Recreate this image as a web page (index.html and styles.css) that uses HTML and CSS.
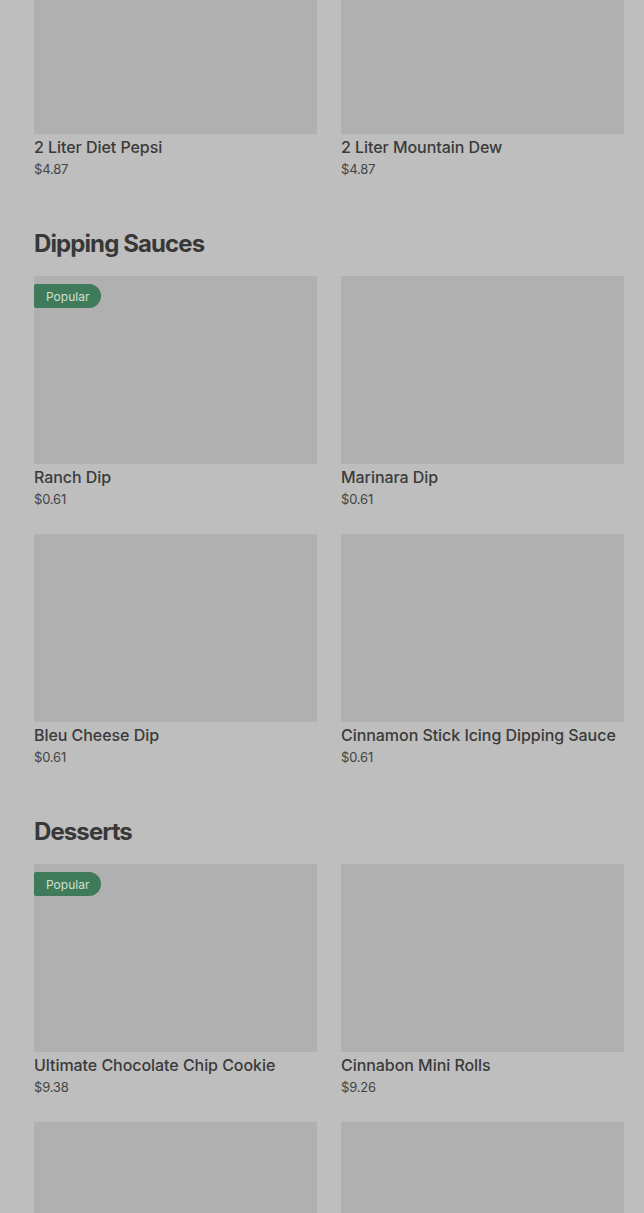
FILE: index.html
```html
<!DOCTYPE html>
<html>
<head>
<meta charset="utf-8">
<link rel="stylesheet" href="styles.css">
</head>
<body>
<main class="menu">
  <section class="section section-first">
    <div class="grid">
      <div class="card"><div class="thumb"></div><div class="name">2 Liter Diet Pepsi</div><div class="price">$4.87</div></div>
      <div class="card"><div class="thumb"></div><div class="name">2 Liter Mountain Dew</div><div class="price">$4.87</div></div>
    </div>
  </section>
  <section class="section">
    <h2 class="heading">Dipping Sauces</h2>
    <div class="grid">
      <div class="card"><div class="thumb"><span class="badge">Popular</span></div><div class="name">Ranch Dip</div><div class="price">$0.61</div></div>
      <div class="card"><div class="thumb"></div><div class="name">Marinara Dip</div><div class="price">$0.61</div></div>
      <div class="card"><div class="thumb"></div><div class="name">Bleu Cheese Dip</div><div class="price">$0.61</div></div>
      <div class="card"><div class="thumb"></div><div class="name">Cinnamon Stick Icing Dipping Sauce</div><div class="price">$0.61</div></div>
    </div>
  </section>
  <section class="section">
    <h2 class="heading">Desserts</h2>
    <div class="grid">
      <div class="card"><div class="thumb"><span class="badge">Popular</span></div><div class="name">Ultimate Chocolate Chip Cookie</div><div class="price">$9.38</div></div>
      <div class="card"><div class="thumb"></div><div class="name">Cinnabon Mini Rolls</div><div class="price">$9.26</div></div>
      <div class="card"><div class="thumb"></div><div class="name">&nbsp;</div><div class="price">&nbsp;</div></div>
      <div class="card"><div class="thumb"></div><div class="name">&nbsp;</div><div class="price">&nbsp;</div></div>
    </div>
  </section>
</main>
</body>
</html>
```

FILE: styles.css
```css
html, body {
  margin: 0;
  padding: 0;
  background: #bebebe;
  overflow: hidden;
}
body {
  font-family: Inter, "Noto Sans", sans-serif;
  color: #3a3a3a;
}
.menu {
  padding: 0 20px 0 34px;
  margin-top: -54px;
}
.section {
  padding-top: 48px;
}
.section-first {
  padding-top: 0;
}
.heading {
  margin: 0 0 16px;
  font-size: 24px;
  line-height: 32px;
  font-weight: 700;
  letter-spacing: -0.9px;
  color: #383838;
}
.grid {
  display: grid;
  grid-template-columns: 283px 283px;
  column-gap: 24px;
  row-gap: 24px;
}
.card {
  display: flex;
  flex-direction: column;
}
.thumb {
  position: relative;
  height: 188px;
  background: #b0b0b0;
}
.badge {
  position: absolute;
  top: 8px;
  left: 0;
  height: 24px;
  padding: 0 12px;
  display: flex;
  align-items: center;
  background: #3f7b5a;
  color: #cfe0d4;
  font-size: 12px;
  border-radius: 2px 12px 12px 2px;
}
.name {
  padding-top: 1px;
  font-size: 16px;
  line-height: 24px;
  font-weight: 500;
  color: #3a3a3a;
  letter-spacing: -0.05px;
}
.price {
  font-size: 13px;
  line-height: 21px;
  color: #444;
  letter-spacing: -0.2px;
}
```
